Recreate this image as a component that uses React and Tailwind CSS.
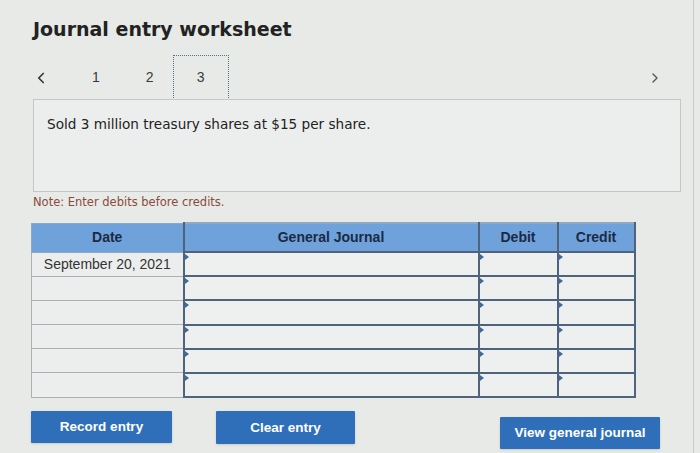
import { ChevronLeft, ChevronRight } from "lucide-react";

/* ─── Journal rows ──────────────────────────────────────────────────────── */
const ROWS = [
  { date: "September 20, 2021" },
  { date: "" },
  { date: "" },
  { date: "" },
  { date: "" },
  { date: "" },
];

const verdana = "font-['DejaVu_Sans',Verdana,sans-serif]";
const arial = "font-['Liberation_Sans',Arial,sans-serif]";

function Marker() {
  return (
    <span className="absolute left-0 top-[1px] w-0 h-0 border-y-[3px] border-y-transparent border-l-[4px] border-l-[#3e6a9a]" />
  );
}

function InputCell() {
  return (
    <td className="relative border-2 border-[#4f647c] bg-[#eef0ef] h-[24.2px] p-0">
      <Marker />
    </td>
  );
}

export default function App() {
  return (
    <div className="w-[700px] h-[453px] bg-[#e7eae7] overflow-hidden">
      <div className="w-[694px] h-[453px] border-r border-[#c9ccc9] flex flex-col">
        {/* ── Title ─────────────────────────────────────────── */}
        <h1 className={`${verdana} font-bold text-[19px] text-[#222] pl-[33px] pt-[17px] leading-[24px]`}>
          Journal entry worksheet
        </h1>

        {/* ── Steps nav ─────────────────────────────────────── */}
        <div className={`${arial} flex items-center mt-[14px] h-[45px] pl-[32px] pr-[30px] text-[14px] text-[#3a3a3a]`}>
          <ChevronLeft className="w-[18px] h-[18px] text-[#333]" strokeWidth={2.2} />
          <span className="ml-[42px]">1</span>
          <span className="ml-[46px]">2</span>
          <span className="ml-[19px] w-[56px] h-[45px] border border-dotted border-[#5d6f86] flex items-center justify-center">
            3
          </span>
          <ChevronRight className="ml-auto w-[16px] h-[16px] text-[#555]" strokeWidth={2} />
        </div>

        {/* ── Description ───────────────────────────────────── */}
        <div className="ml-[33px] w-[648px] h-[93px] border border-[#c4c7c4] bg-[#eceeed] -mt-[1px]">
          <p className={`${verdana} text-[13.6px] leading-[18px] text-[#222] pl-[13px] pt-[15px]`}>
            Sold 3 million treasury shares at $15 per share.
          </p>
        </div>

        <p className={`${verdana} text-[11.5px] leading-[16px] text-[#8a4b3c] pl-[33px] mt-[2px]`}>
          Note: Enter debits before credits.
        </p>

        {/* ── Journal table ─────────────────────────────────── */}
        <table className={`${arial} ml-[31px] mt-[12px] w-[603px] border-collapse table-fixed text-[14px]`}>
          <colgroup>
            <col className="w-[152px]" />
            <col className="w-[295px]" />
            <col className="w-[79px]" />
            <col className="w-[77px]" />
          </colgroup>
          <thead>
            <tr className="bg-[#6fa2da] text-[#1b2a44] font-bold h-[29px]">
              <th className="border border-[#8fa8c4] border-r-2 border-r-[#4f647c] font-bold">Date</th>
              <th className="border-2 border-[#4f647c] border-t-[#8fa8c4] font-bold">General Journal</th>
              <th className="border-2 border-[#4f647c] border-t-[#8fa8c4] font-bold">Debit</th>
              <th className="border-2 border-[#4f647c] border-t-[#8fa8c4] font-bold">Credit</th>
            </tr>
          </thead>
          <tbody>
            {ROWS.map((r, i) => (
              <tr key={i}>
                <td className="border border-[#a9b0b6] bg-[#eceeed] h-[24.2px] p-0 text-center text-[#333] leading-none">
                  {r.date}
                </td>
                <InputCell />
                <InputCell />
                <InputCell />
              </tr>
            ))}
          </tbody>
        </table>

        {/* ── Buttons ───────────────────────────────────────── */}
        <div className={`${arial} flex items-start mt-[13px] pl-[31px] text-white font-bold text-[13.5px]`}>
          <button className="w-[141px] h-[32px] bg-[#2f6fba] rounded-[1px] shadow-sm">Record entry</button>
          <button className="ml-[44px] w-[139px] h-[33px] bg-[#2f6fba] rounded-[1px] shadow-sm">Clear entry</button>
          <button className="ml-[145px] mt-[6px] w-[160px] h-[32px] bg-[#2f6fba] rounded-[1px] shadow-sm">
            View general journal
          </button>
        </div>
      </div>
    </div>
  );
}
